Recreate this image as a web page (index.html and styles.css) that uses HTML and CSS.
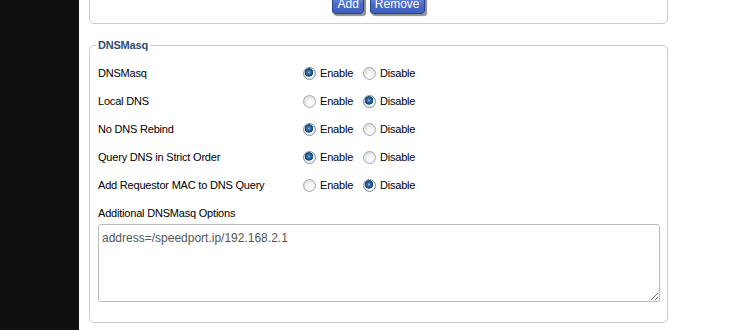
FILE: index.html
```html
<!DOCTYPE html>
<html>
<head>
<meta charset="utf-8">
<link rel="stylesheet" href="styles.css">
</head>
<body>
<div class="page">
  <div class="sidebar"></div>
  <div class="main">
    <div class="box top-box">
      <div class="buttons">
        <button class="btn">Add</button>
        <button class="btn">Remove</button>
      </div>
    </div>
    <fieldset class="set">
      <legend>DNSMasq</legend>
      <div class="rows">
        <div class="row">
          <span class="label">DNSMasq</span>
          <span class="radio on"></span><span class="opt">Enable</span>
          <span class="radio"></span><span class="opt">Disable</span>
        </div>
        <div class="row">
          <span class="label">Local DNS</span>
          <span class="radio"></span><span class="opt">Enable</span>
          <span class="radio on"></span><span class="opt">Disable</span>
        </div>
        <div class="row">
          <span class="label">No DNS Rebind</span>
          <span class="radio on"></span><span class="opt">Enable</span>
          <span class="radio"></span><span class="opt">Disable</span>
        </div>
        <div class="row">
          <span class="label">Query DNS in Strict Order</span>
          <span class="radio on"></span><span class="opt">Enable</span>
          <span class="radio"></span><span class="opt">Disable</span>
        </div>
        <div class="row">
          <span class="label">Add Requestor MAC to DNS Query</span>
          <span class="radio"></span><span class="opt">Enable</span>
          <span class="radio on"></span><span class="opt">Disable</span>
        </div>
      </div>
      <div class="area-label">Additional DNSMasq Options</div>
      <textarea class="area">address=/speedport.ip/192.168.2.1</textarea>
    </fieldset>
  </div>
</div>
</body>
</html>
```

FILE: styles.css
```css
html, body {
  margin: 0;
  padding: 0;
  background: #ffffff;
  height: 100%;
  overflow: hidden;
}
body {
  font-family: "Liberation Sans", Arial, sans-serif;
  font-size: 11px;
  letter-spacing: -0.2px;
  color: #000;
}
.page {
  display: flex;
  height: 330px;
}
.sidebar {
  width: 79px;
  flex: none;
  background: #101010;
}
.main {
  width: 579px;
  margin-left: 10px;
  margin-top: -20px;
}
.box {
  border: 1px solid #cccccc;
  border-radius: 5px;
}
.top-box {
  padding: 14px 0 9px;
}
.buttons {
  display: flex;
  justify-content: center;
  gap: 6px;
}
.btn {
  font-family: "Liberation Sans", Arial, sans-serif;
  font-size: 12px;
  letter-spacing: 0;
  color: #ffffff;
  height: 19px;
  padding: 0 4px;
  border: 1px solid #2b4490;
  border-radius: 3px;
  background: linear-gradient(#6b8de0, #4a6cc8 50%, #3d5fbd);
  box-shadow: 2px 2px 1px rgba(0, 0, 0, 0.45);
  line-height: 17px;
}
.set {
  margin: 15px 0 0;
  padding: 0 7px 20px 8px;
  border: 1px solid #cccccc;
  border-radius: 5px;
}
.set legend {
  font-weight: bold;
  font-size: 11px;
  color: #2f4d75;
  padding: 0 2px;
  margin-left: -2px;
  line-height: 13px;
}
.rows {
  padding-top: 7px;
}
.row {
  display: flex;
  align-items: center;
  height: 28px;
}
.label {
  width: 205px;
  flex: none;
}
.radio {
  width: 11px;
  height: 11px;
  border-radius: 50%;
  border: 1px solid #a5acb5;
  background: radial-gradient(circle at 60% 65%, #ffffff 0%, #f2f2f2 40%, #cfcfcf 100%);
  flex: none;
}
.radio.on {
  border-color: #7d8ea3;
  background:
    radial-gradient(circle at 45% 40%, #a8cdee 0, #3272ad 1.5px, #1b4a7c 3.5px, #23527f 4px, transparent 4.5px),
    radial-gradient(circle at 60% 65%, #ffffff 0%, #eeeeee 50%, #c8c8c8 100%);
}
.opt {
  margin-left: 4px;
  margin-right: 10px;
  width: 33px;
}
.area-label {
  margin-top: 6px;
  line-height: 16px;
}
.area {
  display: block;
  box-sizing: border-box;
  width: 562px;
  height: 78px;
  margin-top: 3px;
  border: 1px solid #bbbbbb;
  border-radius: 3px;
  padding: 6px 3px 4px;
  font-family: "Liberation Sans", Arial, sans-serif;
  font-size: 12px;
  letter-spacing: 0;
  color: #555555;
  background: #ffffff;
}
```
